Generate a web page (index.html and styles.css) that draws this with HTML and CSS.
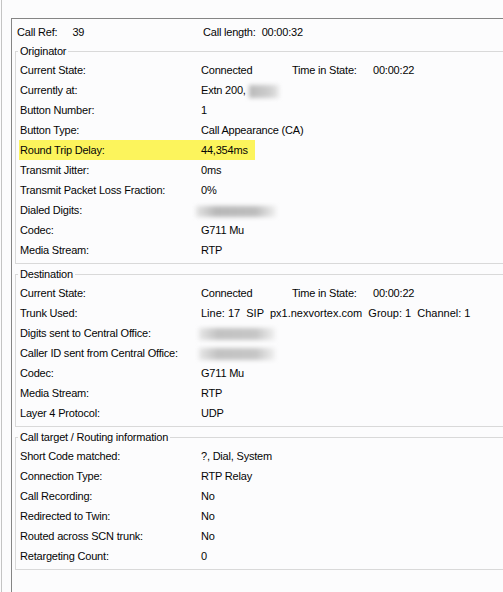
FILE: index.html
```html
<!DOCTYPE html>
<html>
<head>
<meta charset="utf-8">
<link rel="stylesheet" href="styles.css">
</head>
<body>
<div class="window">
  <div class="edge"></div>
  <div class="frame">
    <div class="header">
      <span class="h-ref">Call Ref:<span class="h-val">39</span></span>
      <span class="h-len">Call length:<span class="h-val2">00:00:32</span></span>
    </div>

    <fieldset class="group">
      <legend>Originator</legend>
      <div class="row"><span class="label">Current State:</span><span class="val w91">Connected</span><span class="val w81">Time in State:</span><span class="val">00:00:22</span></div>
      <div class="row"><span class="label">Currently at:</span><span class="val">Extn 200, <span class="blur b-ext"></span></span></div>
      <div class="row"><span class="label">Button Number:</span><span class="val">1</span></div>
      <div class="row"><span class="label">Button Type:</span><span class="val">Call Appearance (CA)</span></div>
      <div class="row"><div class="hl"><span class="label">Round Trip Delay:</span><span class="val">44,354ms</span></div></div>
      <div class="row"><span class="label">Transmit Jitter:</span><span class="val">0ms</span></div>
      <div class="row"><span class="label">Transmit Packet Loss Fraction:</span><span class="val">0%</span></div>
      <div class="row"><span class="label">Dialed Digits:</span><span class="val"><span class="blur b-dial"></span></span></div>
      <div class="row"><span class="label">Codec:</span><span class="val">G711 Mu</span></div>
      <div class="row"><span class="label">Media Stream:</span><span class="val">RTP</span></div>
    </fieldset>

    <fieldset class="group">
      <legend>Destination</legend>
      <div class="row"><span class="label">Current State:</span><span class="val w91">Connected</span><span class="val w81">Time in State:</span><span class="val">00:00:22</span></div>
      <div class="row"><span class="label">Trunk Used:</span><span class="val pre">Line: 17  SIP  px1.nexvortex.com  Group: 1  Channel: 1</span></div>
      <div class="row"><span class="label">Digits sent to Central Office:</span><span class="val"><span class="blur b-co"></span></span></div>
      <div class="row"><span class="label">Caller ID sent from Central Office:</span><span class="val"><span class="blur b-co"></span></span></div>
      <div class="row"><span class="label">Codec:</span><span class="val">G711 Mu</span></div>
      <div class="row"><span class="label">Media Stream:</span><span class="val">RTP</span></div>
      <div class="row"><span class="label">Layer 4 Protocol:</span><span class="val">UDP</span></div>
    </fieldset>

    <fieldset class="group">
      <legend>Call target / Routing information</legend>
      <div class="row"><span class="label">Short Code matched:</span><span class="val">?, Dial, System</span></div>
      <div class="row"><span class="label">Connection Type:</span><span class="val">RTP Relay</span></div>
      <div class="row"><span class="label">Call Recording:</span><span class="val">No</span></div>
      <div class="row"><span class="label">Redirected to Twin:</span><span class="val">No</span></div>
      <div class="row"><span class="label">Routed across SCN trunk:</span><span class="val">No</span></div>
      <div class="row"><span class="label">Retargeting Count:</span><span class="val">0</span></div>
    </fieldset>
  </div>
</div>
</body>
</html>
```

FILE: styles.css
```css
html, body {
  margin: 0;
  padding: 0;
}
body {
  width: 503px;
  height: 592px;
  overflow: hidden;
  background: #fcfcfd;
  font-family: "Liberation Sans", Arial, sans-serif;
  font-size: 11px;
  letter-spacing: -0.2px;
  color: #050505;
}
.window {
  display: flex;
  height: 592px;
}
.edge {
  width: 1px;
  margin-left: 1px;
  background: #c4c4c4;
  flex: none;
}
.frame {
  flex: 1;
  min-width: 0;
  margin-left: 9px;
  margin-top: 18px;
  border-top: 1px solid #858585;
  border-left: 1px solid #858585;
  padding-left: 3px;
}
.header {
  display: flex;
  height: 26px;
  line-height: 26px;
  padding-left: 2px;
}
.h-ref {
  width: 186px;
}
.h-val {
  margin-left: 15px;
}
.h-val2 {
  margin-left: 6px;
}
.group {
  margin: 0 0 4px 0;
  padding: 2px 0 3px 4px;
  border: 1px solid #d9d9d9;
  border-right: none;
  min-inline-size: 0;
}
.group legend {
  padding: 0 2px;
  margin-left: -2px;
  line-height: 13px;
}
.row {
  display: flex;
  height: 20px;
  line-height: 20px;
  white-space: nowrap;
}
.label {
  width: 181px;
  flex: none;
}
.val {
  flex: none;
}
.w91 {
  width: 91px;
}
.w81 {
  width: 81px;
}
.pre {
  white-space: pre;
  letter-spacing: 0;
}
.hl {
  display: flex;
  width: 235px;
  margin-left: -1px;
  padding-left: 1px;
  background: #fcf45c;
}
.blur {
  display: inline-block;
  vertical-align: middle;
  filter: blur(2px);
}
.b-ext {
  width: 30px;
  height: 13px;
  background: linear-gradient(90deg, #b9b9b9, #cfcfcf 70%, #e8e8e8);
}
.b-dial {
  width: 80px;
  height: 11px;
  margin-left: -5px;
  background: linear-gradient(90deg, #e4e4e4, #b8b8b8 25%, #bdbdbd 75%, #f0f0f0);
}
.b-co {
  width: 76px;
  height: 12px;
  margin-left: -2px;
  background: linear-gradient(90deg, #e6e6e6, #c2c2c2 25%, #c6c6c6 75%, #f0f0f0);
}
```
